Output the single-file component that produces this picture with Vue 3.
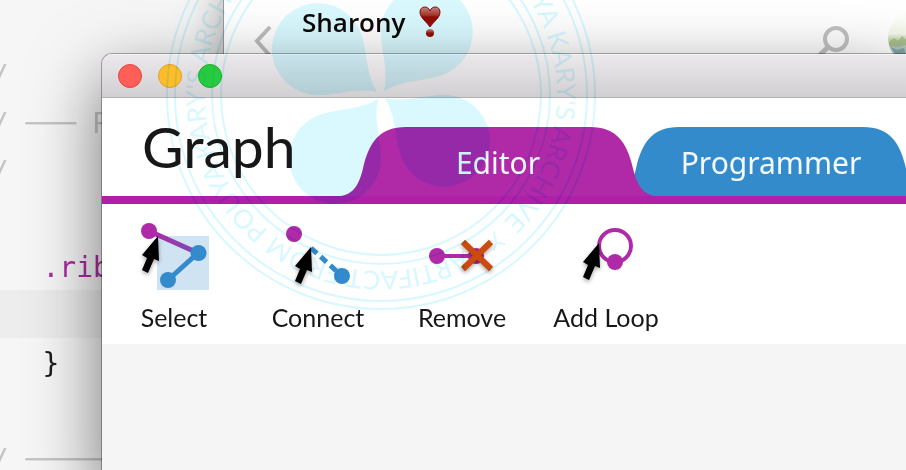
<script setup>
const codeLines = [
  { text: '' },
  { text: '//', kind: 'comment' },
  { text: '// ─── R', kind: 'comment' },
  { text: '//', kind: 'comment' },
  { text: '' },
  { text: '    .ribbon', kind: 'selector' },
  { text: '', active: true },
  { text: '    }', kind: 'brace' },
  { text: '' },
  { text: '// ─────────', kind: 'comment' }
]
const tabs = [
  { name: 'Editor', kind: 'editor' },
  { name: 'Programmer', kind: 'programmer' }
]
const tools = ['Select', 'Connect', 'Remove', 'Add Loop']
const petals = [36, 126, 216, 306]
const arrow = 'l1 25 l-5 -2 l-6 14 l-6 -3 l5 -12 l-5 -3 z'
</script>

<template>
  <main class="desktop">
    <section class="code">
      <pre v-for="(line, i) in codeLines" :key="i" class="line" :class="[line.kind, { active: line.active }]">{{ line.text }}</pre>
    </section>

    <section class="messages">
      <button class="plain" aria-label="Back">
        <svg width="20" height="36" viewBox="0 0 20 36"><path d="M17 3 L4 17 L18 33" fill="none" stroke="#bdbdbd" stroke-width="4" /></svg>
      </button>
      <h2 class="contact">
        Sharony
        <svg width="22" height="32" viewBox="0 0 22 32" role="img" aria-label="Heart exclamation">
          <defs>
            <linearGradient id="heart" x1="0" y1="0" x2="0" y2="1">
              <stop offset="0" stop-color="#e58a80" />
              <stop offset="0.42" stop-color="#c23228" />
              <stop offset="0.5" stop-color="#a80c06" />
              <stop offset="1" stop-color="#b01008" />
            </linearGradient>
          </defs>
          <path d="M11 21 C7 15 1 12 1 6 C1 0 9 -1 11 5 C13 -1 21 0 21 6 C21 12 15 15 11 21 Z" fill="url(#heart)" stroke="#9c1008" />
          <circle cx="11" cy="27" r="4" fill="url(#heart)" />
        </svg>
      </h2>
      <button class="plain search" aria-label="Search">
        <svg width="36" height="36" viewBox="0 0 36 36"><circle cx="22" cy="15" r="11" fill="none" stroke="#c2c2c2" stroke-width="4" /><path d="M14 23 L2 35" stroke="#c2c2c2" stroke-width="5" /></svg>
      </button>
      <span class="avatar">
        <svg width="54" height="54" viewBox="0 0 54 54">
          <defs>
            <linearGradient id="photo" x1="0" y1="0" x2="0" y2="1">
              <stop offset="0.1" stop-color="#fdfefa" />
              <stop offset="0.42" stop-color="#f2f7e8" />
              <stop offset="0.54" stop-color="#c4d4ab" />
              <stop offset="0.7" stop-color="#a9c2bd" />
            </linearGradient>
          </defs>
          <circle cx="27" cy="27" r="27" fill="url(#photo)" />
          <path d="M1 31 l5 -4 4 3 4 -5 4 4 v5 l-8 2 -9 -1z" fill="#94ab72" opacity=".6" />
          <path d="M3 36 l6 3 7 -2 2 8 -10 -1z" fill="#5c8790" opacity=".55" />
        </svg>
      </span>
    </section>

    <section class="window">
      <header class="titlebar">
        <button class="light close" aria-label="Close"></button>
        <button class="light minimize" aria-label="Minimize"></button>
        <button class="light zoom" aria-label="Zoom"></button>
      </header>
      <div class="brand">
        <h1>Graph</h1>
        <nav class="tabs">
          <button v-for="tab in tabs" :key="tab.name" class="tab" :class="tab.kind">
            <svg class="shape" viewBox="0 0 316 70" preserveAspectRatio="none">
              <path d="M0 70 C14 68 19 58 23 42 C29 15 40 0 66 0 H250 C276 0 287 15 293 42 C297 58 302 68 316 70 Z" />
            </svg>
            <span>{{ tab.name }}</span>
          </button>
        </nav>
      </div>
      <div class="toolbar">
        <button v-for="tool in tools" :key="tool" class="tool">
          <svg width="90" height="80" viewBox="0 0 90 80">
            <g v-if="tool === 'Select'">
              <defs>
                <linearGradient id="edge" gradientUnits="userSpaceOnUse" x1="20" y1="16" x2="69" y2="38">
                  <stop offset="0" stop-color="#b02aa8" />
                  <stop offset="1" stop-color="#8048b4" />
                </linearGradient>
              </defs>
              <rect x="28" y="21" width="52" height="54" fill="#cfe3f3" />
              <path d="M20 16 L69 38" stroke="url(#edge)" stroke-width="5" />
              <path d="M69 38 L39 65" stroke="#348bcb" stroke-width="5" />
              <circle cx="20" cy="16" r="8" fill="#b02aa8" />
              <circle cx="69.5" cy="38" r="8" fill="#348bcb" />
              <circle cx="39" cy="65" r="8" fill="#348bcb" />
              <path class="pointer" :d="'M29 21 ' + arrow" />
            </g>
            <g v-else-if="tool === 'Connect'">
              <path d="M38 33 L69 61" stroke="#348bcb" stroke-width="5" stroke-dasharray="8 5" />
              <circle cx="21" cy="19" r="8" fill="#b02aa8" />
              <circle cx="69" cy="61" r="8" fill="#348bcb" />
              <path class="pointer" :d="'M38 32 ' + arrow" />
            </g>
            <g v-else-if="tool === 'Remove'">
              <path d="M20 41 H59" stroke="#b02aa8" stroke-width="4" />
              <circle cx="20" cy="41" r="8" fill="#b02aa8" />
              <circle cx="59" cy="41" r="8" fill="#b02aa8" />
              <path class="cross" d="M46 27 L74 54 M74 27 L46 54" />
            </g>
            <g v-else>
              <circle cx="54" cy="31" r="16" fill="none" stroke="#b02aa8" stroke-width="4" />
              <circle cx="54" cy="47" r="8" fill="#b02aa8" />
              <path class="pointer" :d="'M38 28 ' + arrow" />
            </g>
          </svg>
          <span>{{ tool }}</span>
        </button>
      </div>
    </section>

    <svg class="stamp" viewBox="-216 -216 432 432" aria-hidden="true">
      <g fill="none" stroke="#d8f8ff" stroke-width="2">
        <circle r="214" /><circle r="206" /><circle r="169" /><circle r="160" />
      </g>
      <path v-for="a in petals" :key="a" :transform="`rotate(${a})`" fill="#d9f9ff"
        d="M5 0 C24 -8 34 -24 50 -36.5 A46 46 0 1 1 50 36.5 C34 24 24 8 5 0 Z" />
      <defs>
        <path id="lap" d="M176 0 A176 176 0 0 1 -176 0 A176 176 0 0 1 176 0" />
      </defs>
      <g v-for="turn in [62, 242]" :key="turn" :transform="`rotate(${turn})`" class="motto">
        <text><textPath href="#lap">ARTIFACT FROM POUYA KARY'S ARCHIVE</textPath></text>
        <path d="M-5 0 L0 -10 L7 -15 M0 -10 L-6 -17" transform="rotate(-10) translate(177 0) rotate(90)" />
      </g>
    </svg>
  </main>
</template>

<style>
body { margin: 0; }
</style>

<style scoped>
.desktop { position: relative; min-height: 100vh; overflow: hidden; background: #f6f6f6; font-family: Lato, "Liberation Sans", sans-serif; }
button { border: 0; padding: 0; background: none; color: inherit; font: inherit; }
svg { display: block; }
h1, h2 { margin: 0; }

.code { padding-top: 2px; font: 28px/44px "DejaVu Sans Mono", monospace; }
.line { height: 48px; box-sizing: border-box; margin: 0; padding-top: 4px; font: inherit; text-indent: -25px; color: #1c1c1c; }
.line.active { background: #ededed; }
.line.comment { color: #c4c4c4; }
.line.selector { color: #ab2ca3; }

.messages { position: absolute; left: 223px; top: -12px; right: 0; height: 220px; box-sizing: border-box; display: flex; align-items: flex-start; padding: 12px 0 0 29px; border-left: 1px solid #999; background: #fff; box-shadow: 0 0 40px rgba(0, 0, 0, .35); }
.plain { margin-top: 24px; }
.contact { display: flex; align-items: center; gap: 14px; margin: 6px auto 0 29px; font: 600 26px/32px "Open Sans", "Noto Sans", sans-serif; color: #110808; }
.search { margin-right: 38px; }
.avatar { width: 18px; margin-top: 11px; overflow: hidden; }

.window { position: absolute; left: 102px; top: 54px; right: 0; bottom: 0; overflow: hidden; isolation: isolate; border-radius: 10px 0 0 0; background: #f5f5f5; box-shadow: 0 0 0 1px rgba(0, 0, 0, .3), 0 24px 70px rgba(0, 0, 0, .55); }
.titlebar { display: flex; align-items: center; gap: 16px; height: 44px; box-sizing: border-box; padding-left: 16px; border-bottom: 1px solid #b1afb1; background: linear-gradient(#ebe9eb, #d1cfd1); box-shadow: inset 0 1px #f5f4f5; }
.light { width: 24px; height: 24px; box-sizing: border-box; border: 1px solid #e2463f; border-radius: 50%; background: #ff5f57; }
.minimize { border-color: #dfa023; background: #ffbd2e; }
.zoom { border-color: #1dad2b; background: #28ca42; }

.brand { display: flex; align-items: flex-end; height: 106px; box-sizing: border-box; border-bottom: 8px solid #b01fa8; background: #fff; }
h1 { flex: none; width: 238px; height: 82px; box-sizing: border-box; padding-left: 40px; font-size: 57px; line-height: 64px; font-weight: 400; color: #171717; }
.tabs { display: flex; flex: 1; min-width: 0; }
.tab { position: relative; flex: none; width: 316px; height: 69px; margin-right: -43px; font: 30px/72px "Noto Sans", "Open Sans", sans-serif; color: #f4faff; }
.shape { position: absolute; inset: 0; width: 100%; height: 100%; }
.tab span { position: relative; }
.editor { z-index: 1; }
.editor .shape { fill: #b02aa8; }
.programmer .shape { fill: #348bcb; }

.toolbar { display: grid; grid-template-columns: repeat(4, 144px); padding: 11px 0; background: #fff; }
.tool { display: flex; flex-direction: column; align-items: center; gap: 6px; font-size: 25px; line-height: 32px; color: #171717; }
.pointer { fill: #000; filter: drop-shadow(0 2px 2px rgba(0, 0, 0, .35)); }
.cross { fill: none; stroke: #cc4a0c; stroke-width: 6; filter: drop-shadow(0 2px 2px rgba(0, 0, 0, .35)); }

.stamp { position: absolute; left: 165px; top: -121px; width: 432px; height: 432px; mix-blend-mode: multiply; pointer-events: none; }
.motto { fill: #d8f8ff; font: 26px Lato, sans-serif; }
.motto path { fill: none; stroke: #d8f8ff; stroke-width: 2; }
</style>
